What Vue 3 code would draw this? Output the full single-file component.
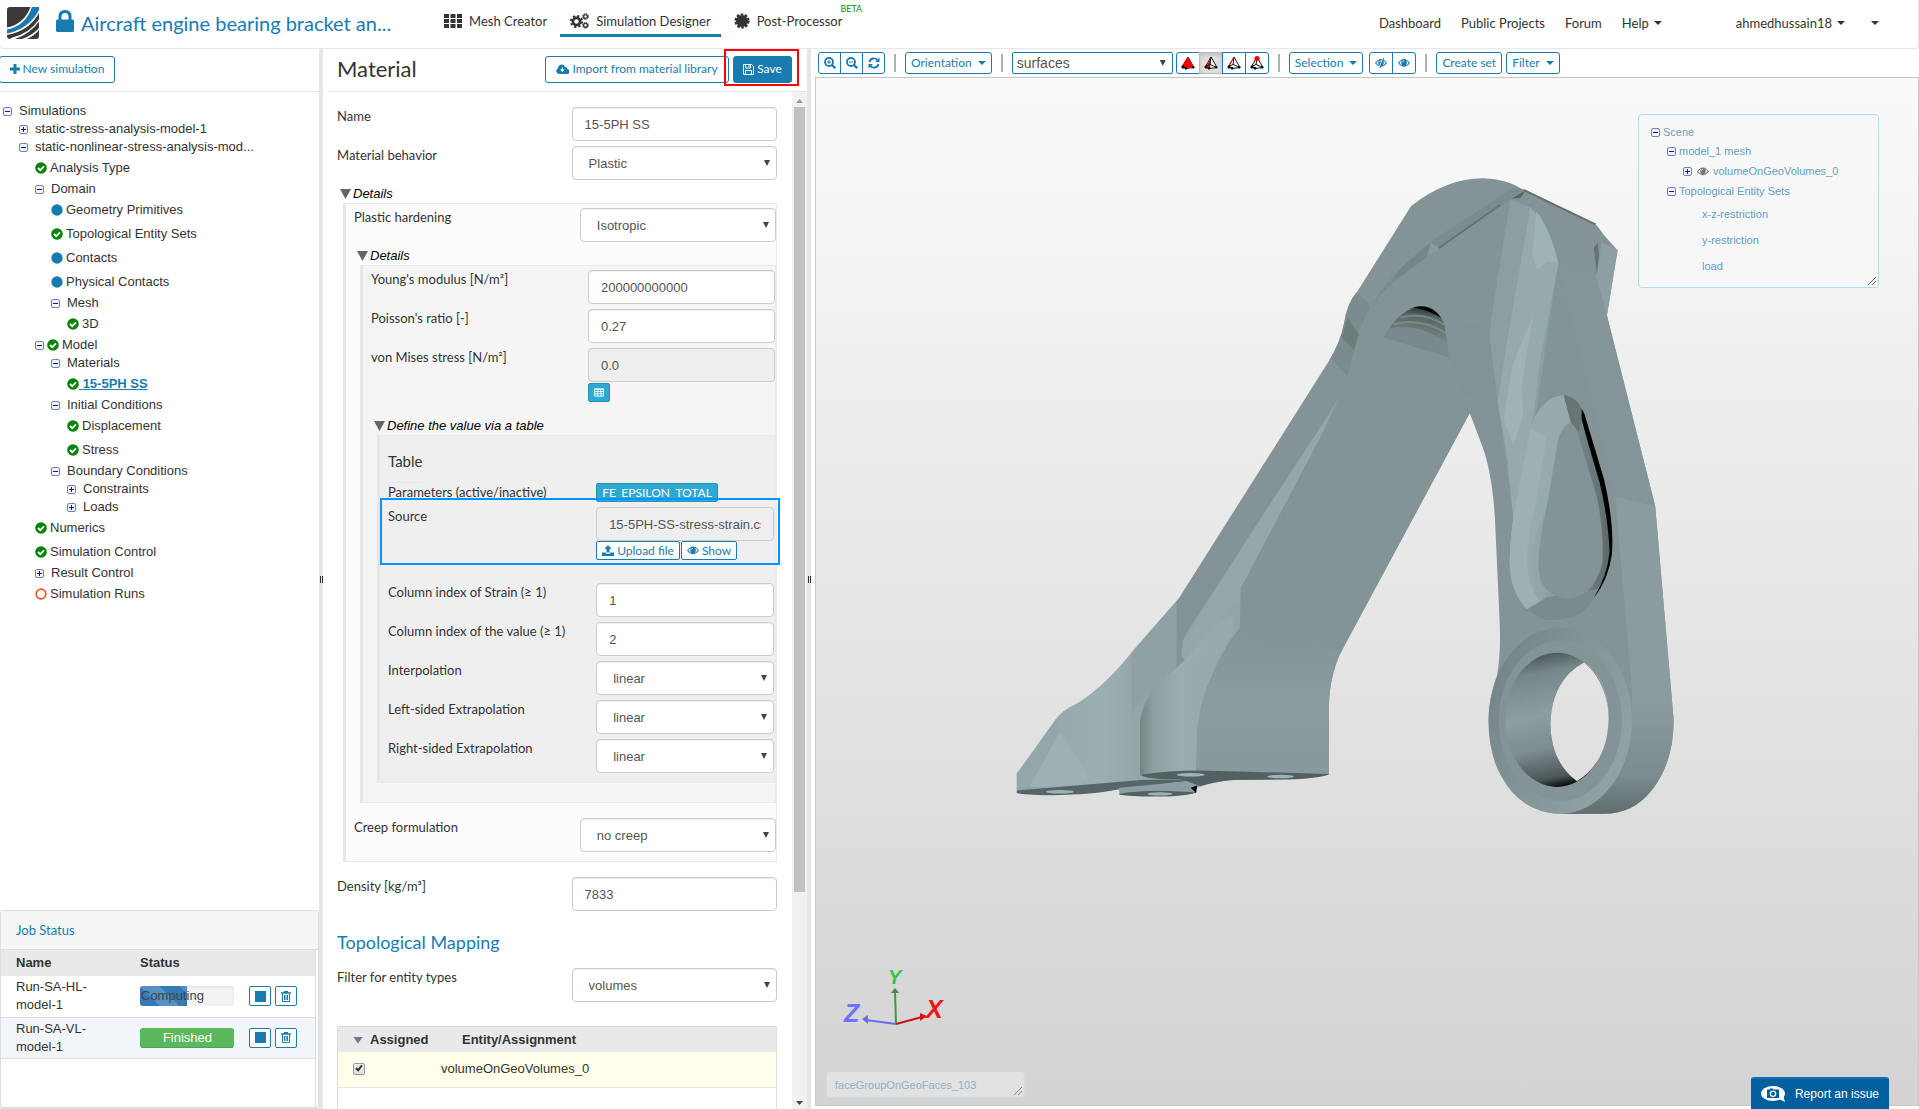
<script setup>
import { ref } from 'vue'

const tree = ref([
  { level: 0, box: 'minus', text: 'Simulations' },
  { level: 1, box: 'plus', text: 'static-stress-analysis-model-1' },
  { level: 1, box: 'minus', text: 'static-nonlinear-stress-analysis-mod...' },
  { level: 2, mark: 'check', text: 'Analysis Type' },
  { level: 2, box: 'minus', text: 'Domain' },
  { level: 3, mark: 'dot', text: 'Geometry Primitives' },
  { level: 3, mark: 'check', text: 'Topological Entity Sets' },
  { level: 3, mark: 'dot', text: 'Contacts' },
  { level: 3, mark: 'dot', text: 'Physical Contacts' },
  { level: 3, box: 'minus', text: 'Mesh' },
  { level: 4, mark: 'check', text: '3D' },
  { level: 2, box: 'minus', mark: 'check', text: 'Model' },
  { level: 3, box: 'minus', text: 'Materials' },
  { level: 4, mark: 'check', text: '15-5PH SS', active: true },
  { level: 3, box: 'minus', text: 'Initial Conditions' },
  { level: 4, mark: 'check', text: 'Displacement' },
  { level: 4, mark: 'check', text: 'Stress' },
  { level: 3, box: 'minus', text: 'Boundary Conditions' },
  { level: 4, box: 'plus', text: 'Constraints' },
  { level: 4, box: 'plus', text: 'Loads' },
  { level: 2, mark: 'check', text: 'Numerics' },
  { level: 2, mark: 'check', text: 'Simulation Control' },
  { level: 2, box: 'plus', text: 'Result Control' },
  { level: 2, mark: 'ring', text: 'Simulation Runs' }
])

const jobs = [
  { name: 'Run-SA-HL-model-1', status: 'Computing', progress: 50 },
  { name: 'Run-SA-VL-model-1', status: 'Finished', progress: 100 }
]

const indexFields = [
  { id: 'col-strain', label: 'Column index of Strain (≥ 1)', value: '1' },
  { id: 'col-value', label: 'Column index of the value (≥ 1)', value: '2' }
]
const methodFields = [
  { id: 'interp', label: 'Interpolation' },
  { id: 'left-extra', label: 'Left-sided Extrapolation' },
  { id: 'right-extra', label: 'Right-sided Extrapolation' }
]

const scene = [
  { kind: 'root', box: 'minus', text: 'Scene' },
  { kind: 'mesh', box: 'minus', text: 'model_1 mesh' },
  { kind: 'volume', box: 'plus', eye: true, text: 'volumeOnGeoVolumes_0' },
  { kind: 'mesh', box: 'minus', text: 'Topological Entity Sets' },
  { kind: 'set', text: 'x-z-restriction' },
  { kind: 'set', text: 'y-restriction' },
  { kind: 'set', text: 'load' }
]

const picks = ['volume', 'face', 'edge', 'node']
</script>

<template>
  <div class="app">
    <svg class="defs" width="0" height="0" aria-hidden="true">
      <symbol id="eye" viewBox="0 0 16 12">
        <path d="M0 6Q8-5 16 6Q8 16 0 6Z" fill="currentColor" />
        <path d="M1.800 6Q3 3.900 5 2.800Q3 7 6 9.600Q3.500 8.500 1.800 6ZM14.200 6Q13 3.900 11 2.800Q13 7 10 9.600Q12.500 8.500 14.200 6Z" fill="#fff" />
        <path d="M5.800 5Q6 3.200 8 3" stroke="#fff" fill="none" />
      </symbol>
      <symbol id="caret" viewBox="0 0 8 4"><path d="M0 0H8L4 4Z" fill="currentColor" /></symbol>
    </svg>

    <header class="topbar">
      <svg class="logo" viewBox="0 0 32 32" aria-label="Logo">
        <rect width="32" height="32" rx="3" fill="#3d3735" />
        <path d="M0 23Q18 19 25 0H32V4Q25 23 0 27Z" fill="#157bb0" />
        <path d="M0 20.500Q17 17 23.500 0H25Q18.500 19 0 22.500ZM0 26.500Q22 22 32 3V6Q22 24 0 28ZM4 31Q22 27 32 12.500V14.500Q23 27 8 32H3ZM15 32Q26 28 32 21V23Q27 29 20 32Z" fill="#fff" />
      </svg>
      <svg class="lock" viewBox="0 0 18 22" aria-hidden="true">
        <path d="M4 10V6.500Q4 1.500 9 1.500T14 6.500V10" fill="none" stroke="#187cb0" stroke-width="3" />
        <rect y="9.500" width="18" height="12.500" rx="1.500" fill="#187cb0" />
      </svg>
      <h1 class="project">Aircraft engine bearing bracket an...</h1>
      <nav class="modes">
        <a href="#" class="mode">
          <svg width="18" height="14" viewBox="0 0 18 14" fill="#333"><path d="M0 0h5v4H0zM6.500 0h5v4h-5zM13 0h5v4h-5zM0 5h5v4H0zM6.500 5h5v4h-5zM13 5h5v4h-5zM0 10h5v4H0zM6.500 10h5v4h-5zM13 10h5v4h-5z" /></svg>
          Mesh Creator
        </a>
        <a href="#" class="mode current">
          <svg width="19" height="16" viewBox="0 0 19 16" fill="none" stroke="#333">
            <circle cx="6.500" cy="8.500" r="3.600" stroke-width="2.600" /><circle cx="6.500" cy="8.500" r="5.600" stroke-width="2" stroke-dasharray="2.200 2.200" />
            <circle cx="15.500" cy="3.500" r="1.900" stroke-width="1.400" /><circle cx="15.500" cy="3.500" r="3" stroke-dasharray="1.200 1.150" />
            <circle cx="15.500" cy="12.300" r="1.900" stroke-width="1.400" /><circle cx="15.500" cy="12.300" r="3" stroke-dasharray="1.200 1.150" />
          </svg>
          Simulation Designer
        </a>
        <a href="#" class="mode post">
          <svg width="16" height="16" viewBox="0 0 16 16"><circle cx="8" cy="8" r="6" fill="#333" /><circle cx="8" cy="8" r="6.500" fill="none" stroke="#333" stroke-width="2.200" stroke-dasharray="2.600 1.480" /></svg>
          Post-Processor
          <span class="beta">BETA</span>
        </a>
      </nav>
      <nav class="account">
        <a href="#">Dashboard</a>
        <a href="#">Public Projects</a>
        <a href="#">Forum</a>
        <a href="#">Help <svg class="caret"><use href="#caret" /></svg></a>
        <a href="#" class="user">ahmedhussain18 <svg class="caret"><use href="#caret" /></svg></a>
        <a href="#" class="extra" aria-label="More"><svg class="caret"><use href="#caret" /></svg></a>
      </nav>
    </header>

    <main class="panes">
      <aside class="sidebar">
        <div class="pane-head side-head">
          <button type="button" class="btn new-sim">
            <svg width="10" height="10" viewBox="0 0 10 10"><path d="M3.500 0h3v3.500H10v3H6.500V10h-3V6.500H0v-3h3.500z" fill="currentColor" /></svg>
            New simulation
          </button>
        </div>
        <ul class="tree">
          <li v-for="(n, i) in tree" :key="i" :class="['node', 'level-' + n.level, { leaf: !n.box, active: n.active }]">
            <span v-if="n.box" :class="['box', n.box]"></span>
            <svg v-if="n.mark" class="mark" viewBox="0 0 12 12" aria-hidden="true">
              <circle v-if="n.mark === 'dot'" cx="6" cy="6" r="5.700" fill="#187cb0" />
              <circle v-else-if="n.mark === 'ring'" cx="6" cy="6" r="4.800" fill="none" stroke="#e8541c" stroke-width="1.700" />
              <template v-else>
                <circle cx="6" cy="6" r="5.800" fill="#078307" />
                <path d="M3 6L5.300 8.200L9 4.300" fill="none" stroke="#fff" stroke-width="1.900" />
              </template>
            </svg>
            <a href="#" class="node-text"><template v-if="n.active">&nbsp;</template>{{ n.text }}</a>
          </li>
        </ul>
        <section class="jobs">
          <h2 class="jobs-title">Job Status</h2>
          <div class="jobs-body">
            <table class="jobs-table">
              <thead>
                <tr><th class="c-name">Name</th><th class="c-status">Status</th><th></th></tr>
              </thead>
              <tbody>
                <tr v-for="j in jobs" :key="j.name">
                  <td class="c-name"><span class="job-name">{{ j.name }}</span></td>
                  <td class="c-status">
                    <div :class="['progress', j.status.toLowerCase()]">
                      <div class="bar" :style="{ width: j.progress + '%' }"></div>
                      <span class="state">{{ j.status }}</span>
                    </div>
                  </td>
                  <td class="c-tools">
                    <div class="tools">
                      <button type="button" class="btn mini" aria-label="Stop"><svg width="11" height="11"><rect width="11" height="11" fill="currentColor" /></svg></button>
                      <button type="button" class="btn mini" aria-label="Delete">
                        <svg width="10" height="11" viewBox="0 0 10 11" fill="none" stroke="currentColor"><path d="M0 2h10M3.500 2V.500h3V2" stroke-width="1.300" /><path d="M1.500 2.500V10.500h7V2.500M3.500 4v5M5 4v5M6.500 4v5" /></svg>
                      </button>
                    </div>
                  </td>
                </tr>
              </tbody>
            </table>
          </div>
        </section>
      </aside>

      <div class="splitter"><i></i></div>

      <section class="material">
        <div class="pane-head mat-head">
          <h2 class="mat-title">Material</h2>
          <button type="button" class="btn import">
            <svg width="13" height="10" viewBox="0 0 13 10"><path d="M3 10A3 3 0 0 1 2 4.300A3.600 3.600 0 0 1 9 3Q11 3 11.500 5A2.500 2.500 0 0 1 10.500 10Z" fill="currentColor" /><path d="M6.300 3.500V6M4.800 5.800L6.300 7.500L7.800 5.800Z" stroke="#fff" fill="#fff" /></svg>
            Import from material library
          </button>
          <div class="save-wrap">
            <button type="button" class="btn save">
              <svg width="11" height="11" viewBox="0 0 11 11" fill="none" stroke="currentColor"><path d="M.500 .500H8.500L10.500 2.500V10.500H.500ZM2.500 .500V4H7.500V.500M2.500 10.500V6.500H8.500V10.500M6 1V3" /></svg>
              Save
            </button>
            <span class="note red"></span>
          </div>
        </div>
        <div class="mat-body">
          <form class="form" @submit.prevent>
            <div class="field"><label for="name">Name</label><div class="control"><input id="name" type="text" class="text" value="15-5PH SS" /></div></div>
            <div class="field"><label for="behavior">Material behavior</label><div class="control"><div class="pick"><select id="behavior"><option>Plastic</option></select></div></div></div>
            <details open>
              <summary>Details</summary>
              <div class="group one">
                <div class="field"><label for="hardening">Plastic hardening</label><div class="control"><div class="pick"><select id="hardening"><option>Isotropic</option></select></div></div></div>
                <details open>
                  <summary>Details</summary>
                  <div class="group two">
                    <div class="field"><label for="young">Young's modulus [N/m²]</label><div class="control"><input id="young" type="text" class="text" value="200000000000" /></div></div>
                    <div class="field"><label for="poisson">Poisson's ratio [-]</label><div class="control"><input id="poisson" type="text" class="text" value="0.27" /></div></div>
                    <div class="field mises">
                      <label for="mises">von Mises stress [N/m²]</label>
                      <div class="control">
                        <input id="mises" type="text" class="text" value="0.0" readonly />
                        <div class="under spaced">
                          <button type="button" class="btn small info table-btn" aria-label="Table">
                            <svg width="11" height="9" viewBox="0 0 11 9" fill="none" stroke="#fff"><path d="M.500 .500h10v8H.500zM0 1h11M.500 3.500h10M.500 6h10M4 1v7.500M7.500 1v7.500" /></svg>
                          </button>
                        </div>
                      </div>
                    </div>
                    <details open>
                      <summary>Define the value via a table</summary>
                      <div class="group three">
                        <h3 class="sub">Table</h3>
                        <div class="field"><span class="label">Parameters (active/inactive)</span><div class="control"><button type="button" class="btn small info">FE_EPSILON_TOTAL</button></div></div>
                        <div class="field source">
                          <label for="source">Source</label>
                          <div class="control">
                            <input id="source" type="text" class="text" value="15-5PH-SS-stress-strain.csv" readonly />
                            <div class="under">
                              <button type="button" class="btn small">
                                <svg width="12" height="11" viewBox="0 0 12 11" fill="currentColor"><path d="M6 0L9.500 4H7.500V7.500H4.500V4H2.500ZM0 7.500H3.500Q4 9 6 9T8.500 7.500H12V11H0Z" /></svg>
                                Upload file
                              </button>
                              <button type="button" class="btn small"><svg width="12" height="9"><use href="#eye" /></svg>Show</button>
                            </div>
                          </div>
                          <span class="note blue"></span>
                        </div>
                        <div v-for="f in indexFields" :key="f.id" class="field"><label :for="f.id">{{ f.label }}</label><div class="control"><input :id="f.id" type="text" class="text" :value="f.value" /></div></div>
                        <div v-for="f in methodFields" :key="f.id" class="field"><label :for="f.id">{{ f.label }}</label><div class="control"><div class="pick"><select :id="f.id"><option>linear</option></select></div></div></div>
                      </div>
                    </details>
                  </div>
                </details>
                <div class="field"><label for="creep">Creep formulation</label><div class="control"><div class="pick"><select id="creep"><option>no creep</option></select></div></div></div>
              </div>
            </details>
            <div class="field"><label for="density">Density [kg/m³]</label><div class="control"><input id="density" type="text" class="text" value="7833" /></div></div>
            <h3 class="mapping">Topological Mapping</h3>
            <div class="field"><label for="filter">Filter for entity types</label><div class="control"><div class="pick"><select id="filter"><option>volumes</option></select></div></div></div>
            <div class="assign">
              <table>
                <thead><tr><th class="c-assigned"><i class="sort"></i>Assigned</th><th class="c-entity">Entity/Assignment</th></tr></thead>
                <tbody><tr><td class="c-assigned"><input id="vol0" type="checkbox" class="tick" checked /></td><td class="c-volume"><label for="vol0">volumeOnGeoVolumes_0</label></td></tr></tbody>
              </table>
            </div>
          </form>
          <div class="scroll" aria-hidden="true"><i class="up"></i><div class="thumb"></div><i class="down"></i></div>
        </div>
      </section>

      <div class="splitter"><i></i></div>

      <section class="viewer">
        <div class="toolbar">
          <div class="btn-group">
            <button type="button" class="btn tool" aria-label="Zoom in"><svg width="12" height="12" viewBox="0 0 12 12" fill="none" stroke="currentColor"><circle cx="5" cy="5" r="4" stroke-width="1.800" /><path d="M8 8L11.200 11.200" stroke-width="2.400" /><path d="M3 5h4M5 3v4" /></svg></button>
            <button type="button" class="btn tool" aria-label="Zoom out"><svg width="12" height="12" viewBox="0 0 12 12" fill="none" stroke="currentColor"><circle cx="5" cy="5" r="4" stroke-width="1.800" /><path d="M8 8L11.200 11.200" stroke-width="2.400" /><path d="M3 5h4" /></svg></button>
            <button type="button" class="btn tool" aria-label="Refresh"><svg width="12" height="12" viewBox="0 0 12 12"><path d="M1.500 5A4.600 4.600 0 0 1 9.500 3M10.500 7A4.600 4.600 0 0 1 2.500 9" fill="none" stroke="currentColor" stroke-width="1.900" /><path d="M11.500 .500V5H7ZM.500 11.500V7H5Z" fill="currentColor" /></svg></button>
          </div>
          <i class="sep"></i>
          <button type="button" class="btn tool wide">Orientation <svg class="caret"><use href="#caret" /></svg></button>
          <i class="sep"></i>
          <div class="pick surfaces"><select aria-label="Representation"><option>surfaces</option></select></div>
          <div class="btn-group picks">
            <button v-for="p in picks" :key="p" type="button" :class="['btn', 'tool', { pressed: p === 'face' }]" :aria-label="'Pick ' + p">
              <svg width="14" height="14" viewBox="0 0 14 14" fill="none" stroke="#111" stroke-linejoin="round">
                <path v-if="p === 'volume'" d="M7 1L1 10.500L5 12.500L13 11.500Z" fill="#f00" stroke="#a00" />
                <path v-else d="M7 1L1.500 10.500L5 12.500L13 11.500Z" fill="#fff" />
                <path v-if="p === 'face'" d="M7 2L2 10.500L6 12.500Z" fill="#f00" stroke="none" />
                <path v-if="p !== 'volume'" d="M7 1L6 8.500L1.500 10.500M6 8.500L13 11.500" />
                <path v-if="p === 'edge'" d="M7 1L1.500 10.500" stroke="#f00" />
                <path d="M1 10H3V12H1ZM4 11.500H6V13H4ZM11.500 10.500H13V12H11.500Z" fill="#111" />
                <circle v-if="p === 'node'" cx="7" cy="2.600" r="2.600" fill="#f00" stroke="none" />
              </svg>
            </button>
          </div>
          <i class="sep"></i>
          <button type="button" class="btn tool wide select-btn">Selection <svg class="caret"><use href="#caret" /></svg></button>
          <div class="btn-group eyes">
            <button type="button" class="btn tool" aria-label="Hide"><svg width="12" height="10" viewBox="0 0 12 10"><use href="#eye" width="12" height="10" /><path d="M4 10L8 0" stroke="#fff" /><path d="M4.800 10L8.800 0" stroke="currentColor" /></svg></button>
            <button type="button" class="btn tool" aria-label="Show all"><svg width="12" height="10"><use href="#eye" /></svg></button>
          </div>
          <i class="sep"></i>
          <button type="button" class="btn tool wide">Create set</button>
          <button type="button" class="btn tool wide filter-btn">Filter <svg class="caret"><use href="#caret" /></svg></button>
        </div>

        <div class="canvas">
          <svg class="model" viewBox="-555 -219 3309 3084" role="img" aria-label="Bracket mesh">
            <defs>
              <linearGradient id="foot" x1="0" x2="1"><stop offset="0" stop-color="#8b9da0" /><stop offset=".15" stop-color="#95a9ac" /><stop offset=".45" stop-color="#9bafb2" /><stop offset=".75" stop-color="#90a2a5" /><stop offset="1" stop-color="#8fa1a3" /></linearGradient>
              <linearGradient id="front" x1="0" x2="1"><stop offset="0" stop-color="#74847f" /><stop offset=".12" stop-color="#8b9ea0" /><stop offset=".4" stop-color="#9aaeb2" /><stop offset="1" stop-color="#91a4a7" /></linearGradient>
              <linearGradient id="bend" x1="0" x2="0" y1="0" y2="1"><stop offset="0" stop-color="#829496" /><stop offset=".5" stop-color="#8a9c9f" /><stop offset="1" stop-color="#87999c" /></linearGradient>
              <linearGradient id="arch" x1=".7" x2=".5" y1="0" y2="1"><stop offset="0" stop-color="#1d2223" /><stop offset=".2" stop-color="#566464" /><stop offset=".6" stop-color="#74847f" /><stop offset="1" stop-color="#829496" /></linearGradient>
              <linearGradient id="bore" x1=".4" x2=".55" y1="0" y2="1"><stop offset="0" stop-color="#4c5858" /><stop offset=".14" stop-color="#76878a" /><stop offset=".45" stop-color="#8c9ea1" /><stop offset=".7" stop-color="#7c8c8f" /><stop offset=".92" stop-color="#4b5658" /><stop offset="1" stop-color="#050606" /></linearGradient>
              <linearGradient id="drop" x1="0" x2="1"><stop offset="0" stop-color="#9cb0b4" /><stop offset=".3" stop-color="#92a6a8" /><stop offset=".62" stop-color="#7b8c8e" /><stop offset="1" stop-color="#5a6769" /></linearGradient>
              <linearGradient id="side" x1="0" x2="0" y1="0" y2="1"><stop offset="0" stop-color="#8a9c9f" /><stop offset=".65" stop-color="#8a9c9f" /><stop offset=".88" stop-color="#7b8b8e" /><stop offset="1" stop-color="#5f6d6e" /></linearGradient>
              <linearGradient id="rim" x1="0" x2="1" y1="0" y2=".6"><stop offset="0" stop-color="#728284" /><stop offset=".5" stop-color="#829395" /><stop offset="1" stop-color="#8fa1a5" /></linearGradient>
            </defs>
            <g transform="scale(1 1.301)">
              <!-- rear foot and the small middle foot -->
              <path d="M48 1437L70 1418L165 1312Q185 1290 230 1275Q320 1230 400 1150L535 1032V1200L430 1440L600 1452L300 1478Q130 1490 48 1482Z" fill="url(#foot)" />
              <path d="M392 1160L528 1040V1200L440 1260L392 1300Z" fill="#8fa1a4" />
              <path d="M85 1468L177 1340L265 1440L240 1464Z" fill="#9db1b5" />
              <path d="M165 1312L177 1340L85 1468L48 1476V1437Z" fill="#93a6aa" />
              <path d="M48 1476L420 1452L600 1450L350 1474Q280 1486 150 1487Q70 1487 48 1482Z" fill="#566567" />
              <path d="M355 1470L605 1452L640 1458L588 1470L587 1482Q480 1494 356 1486Z" fill="#8c9ea2" />
              <path d="M356 1484Q400 1478 480 1477L587 1480Q560 1489 480 1490T356 1486Z" fill="#536163" />
              <path d="M570 1470L590 1464L586 1482Z" fill="#050606" />
              <!-- main body -->
              <path fill-rule="evenodd" fill="#849496" d="M1232 127Q1340 62 1450 63Q1520 65 1570 90L1790 172L1812 195L1852 229L1820 380L1965 820L2020 1310Q2022 1410 1955 1475Q1900 1530 1810 1530H1680Q1560 1528 1500 1440Q1464 1390 1464 1310Q1466 1260 1490 1210Q1502 1160 1498 1090L1485 870Q1478 740 1440 670L1408 605L1040 1130Q985 1200 985 1290V1440L586 1434L528 1190V1040L535 1032L985 485Q1020 440 1030 400Q1040 350 1070 325ZM1752 1180Q1825 1220 1825 1310Q1823 1410 1730 1455Q1650 1410 1650 1320Q1655 1220 1752 1180Z" />
              <path d="M1150 430L1345 475L1408 605L1040 1130L1020 1160L735 1140L718 1100L720 1010L960 660L1015 572Z" fill="#829496" />
              <path d="M541 1165Q540 1130 560 1108L1015 572L960 660L720 1010L718 1100L640 1180L560 1180Z" fill="#94a7aa" />
              <path d="M530 1040L720 920L548 1130L541 1180L528 1190Z" fill="#809093" opacity=".4" />
              <path d="M586 1434L588 1360Q592 1240 718 1100L735 1130L1020 1150Q985 1210 985 1290V1440Z" fill="url(#bend)" />
              <path d="M418 1440V1320Q425 1265 480 1225L560 1170L650 1095L695 1045L718 1050V1095Q590 1240 588 1360L586 1434Z" fill="url(#front)" />
              <path d="M650 1095L695 1070L700 1110L640 1180L560 1170Z" fill="#9aadb1" opacity=".6" />
              <path d="M418 1440Q500 1430 600 1430L985 1438Q975 1447 860 1451L700 1452Q640 1456 600 1466L540 1450Q440 1452 418 1440Z" fill="#526062" />
              <g fill="#9fb3b7"><ellipse cx="177" cy="1479" rx="42" ry="4" /><ellipse cx="478" cy="1484" rx="38" ry="4" /><ellipse cx="570" cy="1440" rx="42" ry="4" /><ellipse cx="840" cy="1444" rx="40" ry="4" /></g>
              <!-- crown -->
              <path d="M1110 362Q1160 290 1290 210L1545 82L1578 92L1555 112H1530L1310 228L1200 290Q1140 330 1110 362Z" fill="#7c8b8e" />
              <path d="M1290 210L1318 226L1256 256Z" fill="#8a9a9d" />
              <path d="M1316 224L1500 124" stroke="#626f6e" stroke-width="4" />
              <path d="M1172 300L1200 272L1290 212L1280 244L1200 290Z" fill="#758588" />
              <path d="M1535 110L1575 92L1560 108Z" fill="#56605f" />
              <path d="M1570 90L1700 138L1786 170" stroke="#65716f" stroke-width="5" fill="none" />
              <path d="M1070 325L1110 358L1070 425L1042 520L990 480Q1020 440 1030 400Q1040 350 1070 325Z" fill="#7b8c8e" />
              <path d="M1042 385L1075 425L1060 460L1024 430Z" fill="#6d7d7b" />
              <!-- arch -->
              <path d="M1150 430Q1200 360 1268 358Q1312 362 1332 400L1346 476Z" fill="url(#arch)" />
              <path d="M1160 412Q1250 392 1340 445L1345 476L1150 430Z" fill="#7a8a8c" />
              <path d="M1180 400Q1260 384 1336 420M1200 385Q1270 370 1333 402" stroke="#8a9997" stroke-width="5" fill="none" opacity=".6" />
              <path d="M1236 361Q1290 352 1322 385Q1280 366 1236 361Z" fill="#000" />
              <path d="M1345 475L1340 415L1475 390L1470 440L1492 580L1395 565Z" fill="#819394" />
              <!-- highlight rib on the front leg -->
              <path d="M1530 112L1590 130Q1650 180 1674 260L1665 300L1610 590L1575 720L1540 855L1515 700L1492 580L1468 430L1472 390Z" fill="#8c9ea1" />
              <path d="M1590 130Q1650 180 1674 260L1665 300L1622 470L1600 610L1575 700L1540 855L1520 700L1492 580L1520 440Z" fill="#96a9ad" />
              <path d="M1608 140Q1650 180 1674 260L1640 255L1610 275L1596 240Z" fill="#9fb2b6" />
              <path d="M1600 380L1578 470L1565 540L1568 610L1540 680L1510 620L1535 500L1570 430Z" fill="#9fb3b6" />
              <path d="M1674 262L1790 290L1820 380L1965 820L1845 798Z" fill="#839597" />
              <path d="M1787 290L1798 250L1803 210L1852 229L1820 380Z" fill="#8d9fa2" />
              <path d="M1780 225L1792 210L1796 240L1790 285L1784 245Z" fill="#65726f" />
              <!-- pocket -->
              <path d="M1590 640Q1620 570 1690 563Q1740 570 1750 610L1812 770Q1838 870 1834 930Q1820 1010 1750 1060Q1700 1090 1640 1084Q1530 1050 1528 950Q1530 880 1545 820Z" fill="url(#drop)" />
              <path d="M1590 640Q1620 570 1690 563L1712 628Q1680 640 1672 670L1640 820L1580 940L1528 950Q1530 880 1545 820Z" fill="#97abad" />
              <path d="M1528 950Q1530 880 1545 820L1590 640L1640 660L1610 800Q1578 900 1580 950Q1585 1010 1620 1040L1580 1058Q1530 1020 1528 950Z" fill="#9db0b4" />
              <path d="M1690 563Q1735 570 1748 605L1735 650L1712 628Z" fill="#677576" />
              <path d="M1580 1058L1640 1030L1800 1010Q1750 1084 1640 1084Q1610 1076 1580 1058Z" fill="#7a8a8d" />
              <path d="M1675 665Q1690 630 1710 628Q1730 635 1735 660L1790 800Q1810 870 1807 950Q1780 1030 1705 1033Q1620 1030 1614 960Q1615 900 1640 820Z" fill="#849395" />
              <path d="M1744 595L1752 606Q1785 690 1812 760Q1842 860 1835 930Q1825 990 1780 1032Q1822 980 1828 925Q1824 850 1798 765Q1765 680 1744 620Z" fill="#000" />
              <!-- side face and lug -->
              <path d="M1845 798L1965 820L2020 1310Q2022 1410 1955 1475Q1900 1530 1810 1530H1680Q1800 1520 1865 1420Q1900 1350 1895 1240Z" fill="url(#side)" />
              <circle cx="1680" cy="1315" r="200" fill="none" stroke="url(#rim)" stroke-width="30" />
              <path fill-rule="evenodd" d="M1825 1313A155 155 0 1 0 1515 1313A155 155 0 1 0 1825 1313ZM1752 1180Q1825 1220 1825 1310Q1823 1410 1730 1455Q1650 1410 1650 1320Q1655 1220 1752 1180Z" fill="url(#bore)" />
            </g>
          </svg>

          <svg class="triad" viewBox="0 0 110 64" aria-label="Axes">
            <path d="M54 57L53 24" stroke="#3d9a3d" stroke-width="2" /><path d="M53 21L57 26H49Z" fill="#3f8f3f" />
            <path d="M54 57L24 53" stroke="#6a6af0" stroke-width="2" /><path d="M20 52L26 48V57Z" fill="#6c6cdc" />
            <path d="M54 57L80 50" stroke="#c01818" stroke-width="2" /><path d="M85 49L78 46V54Z" fill="#d01818" />
            <text x="46" y="17" class="axis y">Y</text><text x="2" y="55" class="axis">Z</text><text x="84" y="51" class="axis x">X</text>
          </svg>

          <div class="scene">
            <div v-for="s in scene" :key="s.text" :class="['item', s.kind]">
              <span v-if="s.box" :class="['box', s.box]"></span>
              <svg v-if="s.eye" class="eye" width="12" height="9"><use href="#eye" /></svg>
              {{ s.text }}
            </div>
            <svg class="grip" viewBox="0 0 8 8"><path d="M0 8L8 0M4 8L8 4" stroke="#777" /></svg>
          </div>

          <div class="picked">faceGroupOnGeoFaces_103<svg class="grip" viewBox="0 0 8 8"><path d="M0 8L8 0M4 8L8 4" stroke="#888" /></svg></div>
        </div>

        <button type="button" class="report">
          <svg width="24" height="16" viewBox="0 0 24 16"><ellipse cx="12" cy="7.500" rx="12" ry="7.500" fill="#fff" /><path d="M16 12L24 16L22 9Z" fill="#fff" /><path d="M6 3.500H9V2.500H12V3.500H18V12H6Z" fill="#005f9e" /><circle cx="12" cy="7.700" r="3.300" fill="#fff" /><circle cx="12" cy="7.700" r="2" fill="#005f9e" /></svg>
          Report an issue
        </button>
      </section>
    </main>
  </div>
</template>

<style>
body { margin: 0; background: #fff; }
</style>

<style scoped>
.app { display: flex; flex-direction: column; height: 100vh; overflow: hidden; font: 13px/18px "Liberation Sans", Arial, sans-serif; color: #333; }
.app *, .app *::before, .app *::after { box-sizing: border-box; }
.defs { position: absolute; }
h1, h2, h3 { margin: 0; font-family: Lato, sans-serif; font-weight: 400; }
a { color: inherit; text-decoration: none; }
button, input, select { font-family: inherit; font-size: 13px; }
.caret { width: 8px; height: 4px; flex: none; }

.topbar { display: flex; flex: none; align-items: center; height: 49px; padding: 0 39px 2px 7px; border: 1px solid #e6e6e6; border-width: 0 1px 1px 0; border-radius: 0 0 4px 4px; font: 13px/20px Lato, sans-serif; }
.logo { width: 32px; height: 32px; }
.lock { width: 18px; height: 22px; margin: 0 7px 4px 17px; }
.project { font-size: 20px; line-height: 24px; color: #187cb0; }
.modes { display: flex; align-self: stretch; margin-left: 43px; }
.mode { position: relative; display: flex; align-items: center; gap: 7px; height: 37px; padding: 8px 10px 0; margin-right: 3px; border-bottom: 3px solid transparent; white-space: nowrap; }
.mode.current { border-color: #187cb0; }
.beta { position: absolute; left: 100%; top: 3px; margin-left: -12px; font-size: 9px; line-height: 12px; color: #128a12; }
.account { display: flex; gap: 20px; margin-left: auto; }
.account a { display: flex; align-items: center; gap: 5px; }
.account .user { margin-left: 54px; }
.account .extra { margin-left: 6px; }

.panes { display: grid; grid-template-columns: 319px 4px 484px 4px minmax(0, 1fr); flex: 1; min-height: 0; }
.splitter { display: flex; align-items: center; justify-content: center; background: #e6e6e6; }
.splitter i { width: 3px; height: 7px; border: 1px solid #333; border-width: 0 1px; }
.pane-head { display: flex; flex: none; align-items: center; height: 43px; padding-bottom: 2px; border-bottom: 1px solid #e6e6e6; }

.btn { display: inline-flex; align-items: center; justify-content: center; gap: 3px; padding: 0; border: 1px solid #187cb0; border-radius: 3px; background: #fff; color: #187cb0; font: 12px/18px Lato, sans-serif; white-space: nowrap; }
.btn.small { height: 19px; padding: 0 5px; border-radius: 2px; }
.btn.info { background: #2fa9d1; border-color: #2893b8; color: #fff; }
.btn.mini { width: 22px; height: 20px; border-radius: 2px; }

.sidebar { display: flex; flex-direction: column; min-height: 0; }
.new-sim { height: 27px; width: 116px; margin-left: -1px; }
.tree { flex: 1; min-height: 0; margin: 0; padding: 10px 0 0; list-style: none; overflow: hidden; }
.node { display: flex; align-items: center; height: 18px; white-space: nowrap; }
.node.leaf { height: 24px; }
.level-0 { padding-left: 3px; }
.level-1 { padding-left: 19px; }
.level-2 { padding-left: 35px; }
.level-3 { padding-left: 51px; }
.level-4 { padding-left: 67px; }
.box { position: relative; flex: none; width: 9px; height: 9px; margin-right: 7px; border: 1px solid #6f7fc0; border-radius: 2px; background: #f2f4fa; }
.box::before, .box.plus::after { content: ""; position: absolute; left: 1px; top: 3px; width: 5px; height: 1px; background: #1010b0; }
.box.plus::after { left: 3px; top: 1px; width: 1px; height: 5px; }
.mark { flex: none; width: 12px; height: 12px; margin-right: 3px; }
.box + .mark { margin-left: -4px; }
.active .node-text { color: #187cb0; font-weight: 700; text-decoration: underline; }
.active .mark { margin-right: 0; }

.jobs { display: flex; flex-direction: column; flex: none; height: 199px; border: 1px solid #ddd; border-width: 1px 1px 2px; border-radius: 3px; }
.jobs-title { height: 39px; padding-left: 15px; border-bottom: 1px solid #ddd; background: #f5f5f5; font-size: 13px; line-height: 38px; color: #187cb0; }
.jobs-body { flex: 1; margin-right: 2px; border-right: 1px solid #ddd; }
.jobs-table { width: 100%; border-collapse: collapse; table-layout: fixed; }
.jobs-table th { height: 26px; padding: 0 0 0 15px; background: #e9e9e9; text-align: left; }
.jobs-table td { height: 41px; padding: 0 0 0 15px; border-bottom: 1px solid #ddd; }
.jobs-table tbody tr:nth-child(2) { background: #f2f6fb; }
.jobs-table .c-name { width: 139px; }
.jobs-table .c-status { width: 94px; padding-left: 0; }
.job-name { display: block; width: 84px; }
.progress { position: relative; display: flex; align-items: center; height: 20px; border-radius: 3px; background: #f3f3f3; overflow: hidden; box-shadow: inset 0 1px 2px #ddd; }
.bar { position: absolute; inset: 0 auto 0 0; background: repeating-linear-gradient(45deg, #337ab7 0 14px, #5590c6 14px 28px); }
.finished .bar { background: #5cb85c; box-shadow: inset 0 -1px 0 #4ea34e; }
.state { position: relative; color: #444; padding-left: 1px; }
.finished .state { flex: 1; text-align: center; color: #fff; }
.tools { display: flex; gap: 4px; }

.material { display: flex; flex-direction: column; min-width: 0; min-height: 0; }
.mat-head { margin-left: 4px; padding: 0 15px 2px 10px; }
.mat-title { flex: 1; font-size: 22px; line-height: 26px; }
.import { width: 184px; height: 27px; margin-right: 4px; }
.save-wrap { position: relative; display: flex; }
.save { width: 59px; height: 27px; background: #187cb0; color: #fff; }
.note { position: absolute; border: 2px solid; pointer-events: none; }
.note.red { inset: -7px -7px -3px -9px; border-color: #f00; }
.note.blue { inset: -9px -6px -5px -8px; border-color: #0095ff; }
.mat-body { display: flex; flex: 1; min-height: 0; overflow: hidden; }
.form { flex: 1; padding: 15px 15px 0 14px; }
.field { position: relative; display: flex; justify-content: space-between; align-items: flex-start; margin-bottom: 5px; }
.field > label, .label { font: 13px/19px Lato, sans-serif; }
.control { width: calc(51% - 19px); }
.control > .btn { display: flex; }
.text, .pick select { display: block; width: 100%; height: 34px; margin: 0; padding: 0 12px; border: 1px solid #ccc; border-radius: 4px; background: #fff; box-shadow: inset 0 1px 1px #eee; color: #555; outline: 0; }
.text[readonly] { background: #eee; }
.pick { position: relative; }
.pick select { appearance: none; padding-left: 16px; }
.pick::after { content: ""; position: absolute; right: 7px; top: 50%; width: 6px; height: 6px; margin-top: -3px; background: #444; clip-path: polygon(0 0, 100% 0, 50% 100%); pointer-events: none; }
.under { display: flex; gap: 1px; }
.under.spaced { margin-top: 1px; }
.table-btn { width: 22px; }
.mises { margin-bottom: 15px; }
.source { margin-bottom: 23px; }
summary { display: flex; align-items: center; gap: 2px; height: 18px; padding-left: 3px; list-style: none; font-style: italic; color: #000; }
summary::before { content: ""; width: 11px; height: 10px; background: #666; clip-path: polygon(0 0, 100% 0, 50% 100%); }
.group { margin: 0 0 15px 6px; padding: 4px 0 4px 8px; border: 1px solid #ebebeb; border-left: 3px solid #e6e6e6; }
.one { background: #fcfcfc; }
.two { background: #f5f5f5; }
.three { background: #efefef; }
.sub { width: max-content; height: 43px; border-bottom: 1px solid #e6e6e6; font-size: 15px; line-height: 42px; }
.mapping { height: 52px; font-size: 18px; line-height: 52px; color: #187cb0; }
.assign { height: 120px; margin-top: 24px; border: 1px solid #ddd; }
.assign table { width: 100%; border-collapse: collapse; table-layout: fixed; }
.assign th { height: 25px; padding: 0; background: #e9e9e9; text-align: left; }
.assign td { height: 35px; padding: 0; border-bottom: 1px solid #e6e6e6; background: #ffffec; }
.assign .c-assigned { width: 103px; padding-left: 15px; }
.assign .c-entity { padding-left: 21px; }
.sort { display: inline-block; width: 10px; height: 7px; margin-right: 7px; background: #6d7a90; clip-path: polygon(0 0, 100% 0, 50% 100%); }
.tick { display: block; position: relative; appearance: none; width: 12px; height: 12px; margin: 0; border: 1px solid #999; border-radius: 2px; background: linear-gradient(#f2f2f2, #ddd); }
.tick:checked::after { content: ""; position: absolute; left: 3px; top: 0; width: 4px; height: 7px; border: solid #333; border-width: 0 2px 2px 0; transform: rotate(40deg); }
.scroll { display: flex; flex-direction: column; align-items: center; flex: none; width: 15px; padding: 7px 0 4px; background: #f1f1f1; }
.up, .down { width: 7px; height: 4px; background: #999; clip-path: polygon(50% 0, 100% 100%, 0 100%); }
.down { margin-top: auto; background: #444; clip-path: polygon(0 0, 100% 0, 50% 100%); }
.thumb { width: 11px; height: 78%; margin-top: 4px; background: #c1c1c1; }

.viewer { position: relative; display: flex; flex-direction: column; min-width: 0; padding: 0 0 3px 4px; }
.toolbar { display: flex; flex: none; align-items: center; height: 28px; padding: 0 0 0 3px; }
.btn-group { display: flex; }
.btn-group .btn { width: 23px; margin-left: -1px; border-radius: 0; }
.btn-group .btn:first-child { margin-left: 0; border-radius: 3px 0 0 3px; }
.btn-group .btn:last-child { border-radius: 0 3px 3px 0; }
.picks .btn, .eyes .btn { width: 24px; }
.tool { height: 22px; }
.wide { gap: 6px; padding: 0 5px; }
.tool.pressed { background: #e0e0e0; border-color: #bbb; box-shadow: inset 0 2px 4px #bbb; }
.sep { width: 2px; height: 18px; margin: 0 9px; background: #b0b0b0; }
.surfaces { width: 161px; }
.surfaces select { height: 22px; padding: 0 4px; border-color: #187cb0; border-radius: 2px; font-size: 14px; box-shadow: none; }
.picks { margin-left: 3px; }
.eyes { margin-left: 6px; }
.filter-btn { margin-left: 4px; }
.canvas { position: relative; flex: 1; min-height: 0; border: 1px solid #c6c6c6; background: linear-gradient(#fafafa, #d3d3d3); }
.model { display: block; position: absolute; inset: 0; width: 100%; height: 100%; }
.triad { position: absolute; left: 26px; bottom: 74px; width: 110px; height: 64px; overflow: visible; }
.axis { font: italic 700 25px "Liberation Sans", sans-serif; fill: #7070ff; }
.axis.y { font-size: 20px; fill: #3ec43e; }
.axis.x { fill: #ea1717; }
.scene { position: absolute; right: 39px; top: 36px; width: 241px; height: 174px; padding: 8px 12px; border: 1px solid #b5dcea; border-radius: 4px; background: rgba(248, 248, 248, .6); font-size: 11px; color: #62a0c2; }
.scene .box { margin-right: 3px; }
.item { display: flex; align-items: center; height: 20px; }
.item.root { height: 18px; }
.item.mesh { padding-left: 16px; }
.item.volume { padding-left: 32px; }
.item.set { height: 26px; padding-left: 51px; }
.eye { margin: 0 4px 0 2px; color: #777; }
.grip { position: absolute; right: 2px; bottom: 2px; width: 8px; height: 8px; }
.picked { position: absolute; left: 10px; bottom: 7px; width: 199px; height: 27px; padding: 0 8px; border: 1px solid #cddbe0; border-radius: 4px; background: #e1e1e1; font-size: 11px; line-height: 26px; color: #94b2c2; }
.report { position: absolute; right: 30px; bottom: 0; display: flex; align-items: center; gap: 10px; height: 32px; padding: 0 10px; border: 0; border-top: 2px solid #0a6fb5; border-radius: 3px 3px 0 0; background: #005f9e; color: #fff; font-size: 12px; }
</style>
